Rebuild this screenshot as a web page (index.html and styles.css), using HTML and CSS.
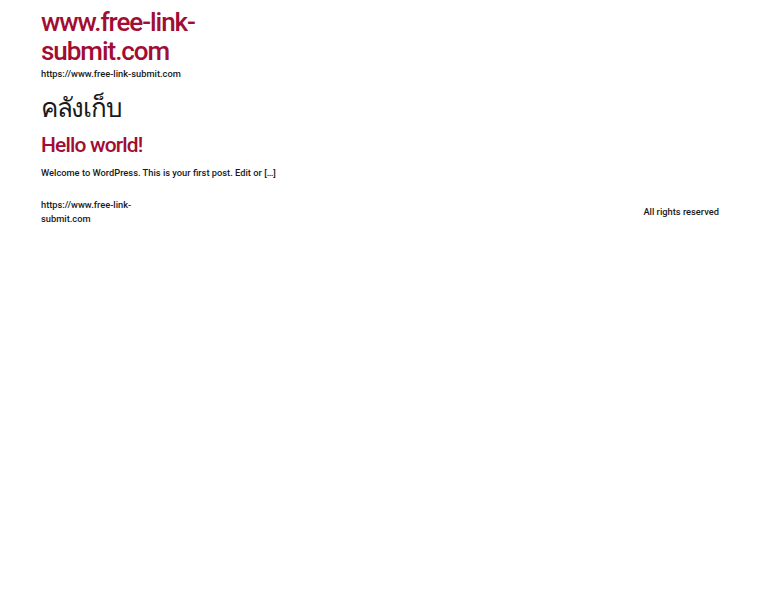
FILE: index.html
```html
<!DOCTYPE html>
<html lang="th">
<head>
<meta charset="utf-8">
<title>คลังเก็บ - www.free-link-submit.com</title>
<link rel="stylesheet" href="styles.css">
</head>
<body>
<div class="page">
  <header class="site-header">
    <div class="branding">
      <p class="site-title"><a href="#">www.free-link-submit.com</a></p>
      <p class="site-desc">https://www.free-link-submit.com</p>
    </div>
  </header>
  <main class="content">
    <h1 class="archive-title">คลังเก็บ</h1>
    <article class="post">
      <h2 class="post-title"><a href="#">Hello world!</a></h2>
      <p class="excerpt">Welcome to WordPress. This is your first post. Edit or […]</p>
    </article>
  </main>
  <footer class="site-footer">
    <div class="footer-left">https://www.free-link-submit.com</div>
    <div class="footer-right">All rights reserved</div>
  </footer>
</div>
</body>
</html>
```
FILE: styles.css
```css
html, body {
  margin: 0;
  padding: 0;
  background: #fff;
}
body {
  font-family: Roboto, "Noto Sans", "Noto Sans Thai", sans-serif;
  color: #1a1a1a;
}
.page {
  padding: 0 41px;
}
.site-header {
  padding-top: 8px;
}
.branding {
  width: 170px;
}
.site-title {
  margin: 0;
  font-size: 26px;
  font-weight: 500;
  line-height: 29px;
  letter-spacing: -0.04em;
}
.site-title a {
  color: #a20d33;
  text-decoration: none;
}
.site-desc {
  margin: 1px 0 0;
  font-size: 9.3px;
  font-weight: 500;
  line-height: 14px;
}
.archive-title {
  margin: 9px 0 0;
  font-size: 26px;
  font-weight: 400;
  line-height: 34px;
  letter-spacing: -0.05em;
  font-family: "Noto Sans", Roboto, sans-serif;
}
.post-title {
  margin: 7px 0 0;
  font-size: 21px;
  font-weight: 500;
  line-height: 28px;
  letter-spacing: -0.04em;
}
.post-title a {
  color: #a20d33;
  text-decoration: none;
}
.excerpt {
  margin: 7px 0 0;
  font-size: 9.3px;
  font-weight: 500;
  line-height: 14px;
}
.site-footer {
  display: flex;
  justify-content: space-between;
  align-items: center;
  margin-top: 18px;
  font-size: 9.3px;
  font-weight: 500;
  line-height: 14px;
}
.footer-left {
  width: 95px;
}
```
